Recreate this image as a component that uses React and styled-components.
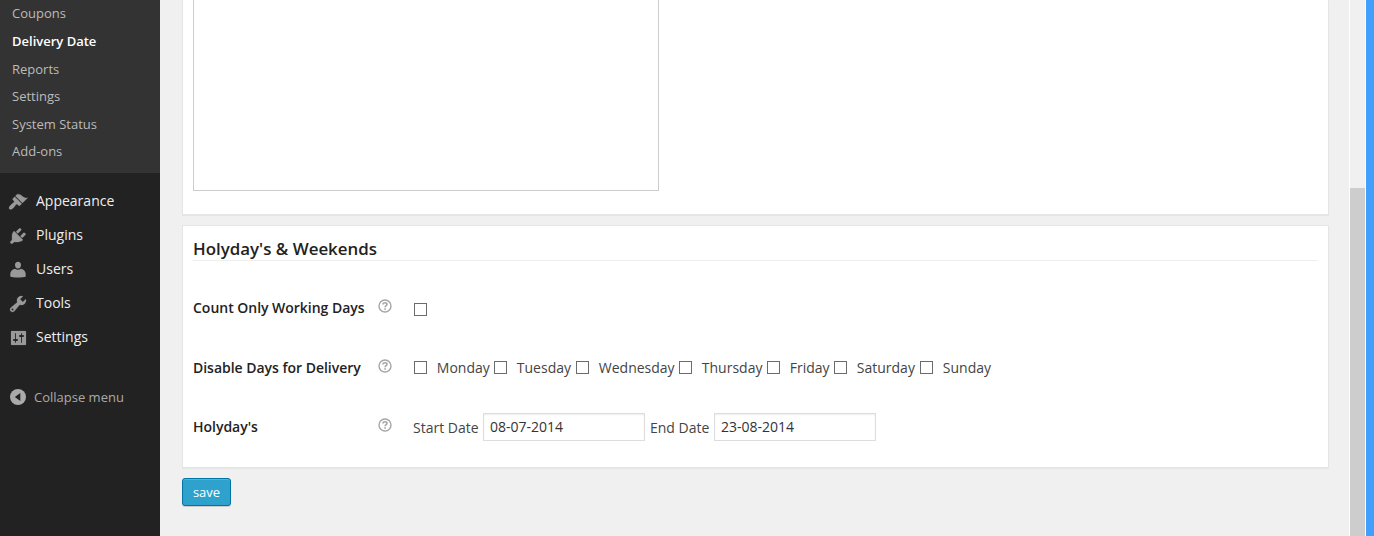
import React from "react";
import styled, { createGlobalStyle } from "styled-components";

const GlobalStyle = createGlobalStyle`
  *, *::before, *::after { box-sizing: border-box; }
  html, body { margin: 0; overflow: hidden; }
  body { font: 14px/20px "Open Sans", sans-serif; color: #444; background: #f0f0f0; }
`;

const Page = styled.div`
  display: flex;
  width: 1374px;
  height: 536px;
  overflow: hidden;
`;

const Sidebar = styled.nav`
  flex: none;
  width: 160px;
  background: #222;
`;

const Submenu = styled.div`
  height: 173px;
  padding-bottom: 7px;
  display: flex;
  flex-direction: column;
  justify-content: flex-end;
  background: #333;
`;

const SubmenuItem = styled.a`
  flex: none;
  height: 27.6px;
  padding-left: 12px;
  font-size: 13px;
  line-height: 27.6px;
  color: ${(p) => (p.$current ? "#fff" : "#bbb")};
  font-weight: ${(p) => (p.$current ? 600 : 400)};
`;

const Menu = styled.div`
  padding-top: 11px;
`;

const MenuItem = styled.a`
  display: flex;
  align-items: center;
  height: 34px;
  padding-left: 8px;
  gap: 8px;
  color: #eee;
`;

const MenuIcon = styled.svg`
  flex: none;
  width: 20px;
  height: 20px;
  margin-top: ${(p) => p.$drop || 0}px;
  fill: #999;
  stroke: #999;
  stroke-width: ${(p) => p.$weight || 0};
`;

const Collapse = styled.a`
  display: flex;
  align-items: center;
  height: 34px;
  margin-top: 26px;
  padding-left: 8px;
  gap: 6px;
  font-size: 13px;
  color: #aaa;
`;

const Content = styled.main`
  flex: none;
  width: 1189px;
  padding-left: 22px;
`;

const Panel = styled.section`
  width: 1147px;
  height: ${(p) => p.$height}px;
  padding: 0 10px;
  margin-bottom: 10px;
  background: #fff;
  border: 1px solid #e5e5e5;
  border-top-width: ${(p) => (p.$cut ? 0 : 1)}px;
  box-shadow: 0 1px 1px rgba(0, 0, 0, 0.04);
`;

const TextArea = styled.div`
  width: 466px;
  height: 191px;
  border: 1px solid #ccc;
  border-top: 0;
`;

const Heading = styled.h3`
  height: 35px;
  margin: 0 0 17px;
  padding-top: 11px;
  border-bottom: 1px solid #eee;
  font-size: 16.9px;
  line-height: 24px;
  font-weight: 600;
  color: #222;
`;

const Row = styled.div`
  display: grid;
  grid-template-columns: 185px 35px 1fr;
  align-items: center;
  height: ${(p) => p.$height}px;
`;

const RowLabel = styled.div`
  font-weight: 600;
  letter-spacing: -0.02px;
  color: #222;
`;

const Help = styled.svg`
  width: 14px;
  height: 14px;
  margin-bottom: 4px;
`;

const Days = styled.div`
  display: grid;
  grid-template-columns: 80px 82px 103px 88px 67px 86px auto;
  justify-content: start;
  padding-left: 1px;
`;

const Day = styled.label`
  display: flex;
  align-items: center;
  gap: 9.8px;
`;

const Checkbox = styled.input.attrs({ type: "checkbox" })`
  appearance: none;
  flex: none;
  width: 13px;
  height: 13px;
  margin: 0;
  border: 1px solid #6b6b6b;
  background: #fff;
`;

const Single = styled.div`
  display: flex;
  padding: 3px 0 0 1px;
`;

const Dates = styled.div`
  display: flex;
  align-items: center;
`;

const DateInput = styled.input`
  width: 162px;
  height: 28px;
  margin: 0 5px 0 4px;
  padding: 0 6px 1px;
  border: 1px solid #ddd;
  box-shadow: inset 0 1px 2px rgba(0, 0, 0, 0.07);
  font: 14px/20px "Open Sans", sans-serif;
  color: #333;
`;

const DateLabel = styled.label`
  width: ${(p) => p.$width}px;
  padding-top: 1px;
  white-space: nowrap;
`;

const SaveButton = styled.button`
  display: block;
  width: 49px;
  height: 28px;
  padding: 0 0 1px;
  border: 1px solid #0074a2;
  border-radius: 3px;
  background: #2ea2cc;
  box-shadow: inset 0 1px 0 rgba(120, 200, 230, 0.5), 0 1px 0 rgba(0, 0, 0, 0.15);
  font: 13px/26px "Open Sans", sans-serif;
  color: #fff;
`;

const ScrollTrack = styled.div`
  flex: none;
  width: 17px;
  padding-top: 188px;
  border: solid #fff;
  border-width: 0 1px;
  background: #f0f0f0;
`;

const ScrollThumb = styled.div`
  height: 348px;
  background: #cdcdcd;
`;

const WindowEdge = styled.div`
  flex: none;
  width: 8px;
  background: #429ffd;
`;

const submenu = ["Coupons", "Delivery Date", "Reports", "Settings", "System Status", "Add-ons"];

const menu = [
  ["Appearance", "M14.48 11.06L7.41 3.99l1.5-1.5c.5-.56 2.3-.47 3.51.32 1.21.8 1.43 1.28 2.91 2.1 1.18.64 2.45 1.26 4.45.85zm-.71.71L6.7 4.7 4.93 6.47c-.39.39-.39 1.02 0 1.41l1.06 1.06c.39.39.39 1.03 0 1.42-.6.6-1.43 1.11-2.21 1.69-.35.26-.7.53-1.01.84C1.43 14.23.4 16.08 1.4 17.07c.99 1 2.84-.03 4.18-1.36.31-.31.58-.66.85-1.02.57-.78 1.08-1.61 1.69-2.21.39-.39 1.02-.39 1.41 0l1.06 1.06c.39.39 1.02.39 1.41 0z", 0.25],
  ["Plugins", "M13.11 4.36L9.87 7.6 8 5.73l3.24-3.24c.35-.34 1.05-.2 1.56.32.52.51.66 1.21.31 1.55zm-8 1.77l.91-1.12 9.01 9.01-1.19.84c-.71.71-2.63 1.16-3.82 1.16H6.14L4.9 17.26c-.59.59-1.54.59-2.12 0-.59-.58-.59-1.53 0-2.12l1.24-1.24v-3.88c0-1.13.4-3.19 1.09-3.89zm7.26 3.97l3.24-3.24c.34-.35 1.04-.21 1.55.31.52.51.66 1.21.31 1.55l-3.24 3.25z", 0.25],
  ["Users", "M10 8.5C7.9 8.5 7 6.5 7 4.9 7 3.1 8.1 1.8 10 1.8s3 1.3 3 3.1c0 1.6-.9 3.6-3 3.6zM6.9 8.7c1.9 1.5 4.3 1.5 6.2 0 2.9.5 4.6 2.8 4.6 5.4v2.3c-2.1 1.4-13.3 1.4-15.4 0v-2.3c0-2.6 1.7-4.9 4.6-5.4z", 0],
  ["Tools", "M16.68 9.77c-1.34 1.34-3.3 1.67-4.95.99l-5.41 6.52c-.99.99-2.59.99-3.58 0s-.99-2.59 0-3.57l6.52-5.42c-.68-1.65-.35-3.61.99-4.95 1.28-1.28 3.12-1.62 4.72-1.06l-2.89 2.89 2.82 2.82 2.86-2.87c.53 1.58.18 3.39-1.08 4.65zM3.81 16.21c.4.39 1.04.39 1.43 0 .4-.4.4-1.04 0-1.43-.39-.4-1.03-.4-1.43 0-.39.39-.39 1.03 0 1.43z", 0.2],
  ["Settings", "M18 16.5v-13c0-.28-.22-.5-.5-.5h-14c-.28 0-.5.22-.5.5v13c0 .28.22.5.5.5h14c.28 0 .5-.22.5-.5zM8 11h1c.55 0 1 .45 1 1s-.45 1-1 1H8v1.5c0 .28-.22.5-.5.5s-.5-.22-.5-.5V13H6c-.55 0-1-.45-1-1s.45-1 1-1h1V5.5c0-.28.22-.5.5-.5s.5.22.5.5V11zm5-2h-1c-.55 0-1-.45-1-1s.45-1 1-1h1V5.5c0-.28.22-.5.5-.5s.5.22.5.5V7h1c.55 0 1 .45 1 1s-.45 1-1 1h-1v5.5c0 .28-.22.5-.5.5s-.5-.22-.5-.5V9z", 0.15],
];

const days = ["Monday", "Tuesday", "Wednesday", "Thursday", "Friday", "Saturday", "Sunday"];

function HelpIcon() {
  return (
    <Help viewBox="0 0 14 14" fill="none" stroke="#a6a6a6">
      <circle cx="7" cy="7" r="6" strokeWidth="1.4" />
      <path d="M5 5.6C5 4.3 5.8 3.7 7 3.7s2 .6 2 1.6C9 6.6 7.1 6.5 7.1 8.2" strokeWidth="1.6" />
      <path d="M7.1 9.2v1.6" strokeWidth="1.7" />
    </Help>
  );
}

export default function App() {
  return (
    <Page>
      <GlobalStyle />
      <Sidebar>
        <Submenu>
          {submenu.map((s) => (
            <SubmenuItem key={s} $current={s === "Delivery Date"}>{s}</SubmenuItem>
          ))}
        </Submenu>
        <Menu>
          {menu.map(([name, d, weight]) => (
            <MenuItem key={name}>
              <MenuIcon viewBox="0 0 20 20" $drop={name === "Users" ? 1 : 2} $weight={weight}>
                <path d={d} fillRule="evenodd" />
              </MenuIcon>
              {name}
            </MenuItem>
          ))}
        </Menu>
        <Collapse>
          <MenuIcon viewBox="0 0 20 20">
            <circle cx="10" cy="10" r="8" fill="#aaa" />
            <path d="M12.3 6v8L6.8 10z" fill="#222" />
          </MenuIcon>
          Collapse menu
        </Collapse>
      </Sidebar>
      <Content>
        <Panel $height={215} $cut>
          <TextArea />
        </Panel>
        <Panel $height={243}>
          <Heading>Holyday's &amp; Weekends</Heading>
          <Row $height={60}>
            <RowLabel>Count Only Working Days</RowLabel>
            <HelpIcon />
            <Single><Checkbox /></Single>
          </Row>
          <Row $height={59}>
            <RowLabel>Disable Days for Delivery</RowLabel>
            <HelpIcon />
            <Days>
              {days.map((d) => (
                <Day key={d}><Checkbox />{d}</Day>
              ))}
            </Days>
          </Row>
          <Row $height={60}>
            <RowLabel>Holyday's</RowLabel>
            <HelpIcon />
            <Dates>
              <DateLabel $width={66}>Start Date</DateLabel>
              <DateInput defaultValue="08-07-2014" />
              <DateLabel $width={60}>End Date</DateLabel>
              <DateInput defaultValue="23-08-2014" />
            </Dates>
          </Row>
        </Panel>
        <SaveButton>save</SaveButton>
      </Content>
      <ScrollTrack><ScrollThumb /></ScrollTrack>
      <WindowEdge />
    </Page>
  );
}
